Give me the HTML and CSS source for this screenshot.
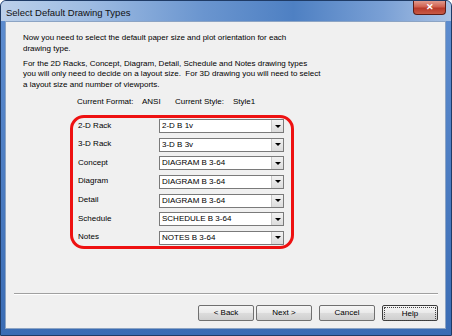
FILE: index.html
```html
<html>
<head>
<link rel="stylesheet" href="styles.css">
</head>
<body>
<div class="window">
  <div class="titlebar">
    <span class="title">Select Default Drawing Types</span>
    <span class="close">&#x2715;</span>
  </div>
  <div class="panel">
    <p class="intro">Now you need to select the default paper size and plot orientation for each<br>drawing type.</p>
    <p class="intro2">For the 2D Racks, Concept, Diagram, Detail, Schedule and Notes drawing types<br>you will only need to decide on a layout size.&nbsp; For 3D drawing you will need to select<br>a layout size and number of viewports.</p>
    <div class="current">
      <span class="k1">Current Format:</span><span class="v1">ANSI</span>
      <span class="k2">Current Style:</span><span class="v2">Style1</span>
    </div>
    <div class="ring">
      <div class="rows">
        <span class="lbl">2-D Rack</span><div class="combo"><span class="val">2-D B 1v</span><span class="arrow"></span></div>
        <span class="lbl">3-D Rack</span><div class="combo"><span class="val">3-D B 3v</span><span class="arrow"></span></div>
        <span class="lbl">Concept</span><div class="combo"><span class="val">DIAGRAM B 3-64</span><span class="arrow"></span></div>
        <span class="lbl">Diagram</span><div class="combo"><span class="val">DIAGRAM B 3-64</span><span class="arrow"></span></div>
        <span class="lbl">Detail</span><div class="combo"><span class="val">DIAGRAM B 3-64</span><span class="arrow"></span></div>
        <span class="lbl">Schedule</span><div class="combo"><span class="val">SCHEDULE B 3-64</span><span class="arrow"></span></div>
        <span class="lbl">Notes</span><div class="combo"><span class="val">NOTES B 3-64</span><span class="arrow"></span></div>
      </div>
    </div>
    <div class="spacer"></div>
    <div class="sep"></div>
    <div class="buttons">
      <span class="btn">&lt; Back</span>
      <span class="btn">Next &gt;</span>
      <span class="btn gap">Cancel</span>
      <span class="btn gap focus"><span class="inner">Help</span></span>
    </div>
  </div>
</div>
</body>
</html>
```
FILE: styles.css
```css
body
{
margin:0;
font-family:"Liberation Sans", Arial, sans-serif;
font-size:8px;
color:#000;
}
.window
{
width:452px;
height:336px;
box-sizing:border-box;
border:1px solid #1f3b66;
border-radius:6px 6px 0 0;
background:linear-gradient(to bottom, #5f8ed0, #3a6cb4);
display:flex;
flex-direction:column;
}
.titlebar
{
height:20px;
display:flex;
justify-content:space-between;
align-items:flex-start;
background:linear-gradient(to right, #bcd0ea 0%, #9dbbe2 20%, #6a95cf 45%, #4e80c3 65%, #7aa0d5 85%, #a9c2e4 100%);
border-radius:5px 5px 0 0;
}
.title
{
font-size:9.5px;
padding:6px 0 0 5px;
color:#111;
}
.close
{
width:33px;
height:14px;
margin-right:5px;
box-sizing:border-box;
border:1px solid #5e1d16;
border-top:none;
border-radius:0 0 4px 4px;
background:linear-gradient(to bottom, #e19a8d 0%, #d0604f 45%, #b8392a 55%, #c85a45 100%);
color:#fff;
font-size:9px;
font-weight:bold;
text-align:center;
line-height:13px;
}
.panel
{
flex:1;
margin:0 5px 6px 4px;
background:#f0f0f0;
border:1px solid #8ca4c4;
display:flex;
flex-direction:column;
}
.intro
{
margin:11px 0 0 17px;
line-height:10.5px;
}
.intro2
{
margin:4.5px 0 0 17px;
line-height:10.5px;
}
.current
{
margin:6.5px 0 0 71px;
line-height:10.5px;
display:flex;
white-space:nowrap;
}
.k1 { width:65px; }
.v1 { width:33px; }
.k2 { width:58px; }
.ring
{
margin:8px 0 0 64px;
width:224px;
box-sizing:border-box;
border:3px solid #ee1111;
border-radius:14px;
padding:1px 6px 1px 5px;
}
.rows
{
display:grid;
grid-template-columns:81px 125px;
row-gap:4.67px;
align-items:center;
}
.lbl
{
position:relative;
top:-1px;
}
.combo
{
height:14px;
box-sizing:border-box;
border:1px solid #7a7a7a;
background:#fff;
display:flex;
align-items:center;
}
.val
{
flex:1;
padding-left:2px;
line-height:12px;
}
.arrow
{
width:11px;
height:12px;
background:linear-gradient(to bottom, #f2f2f2, #dcdcdc);
border-left:1px solid #c8c8c8;
display:flex;
align-items:center;
justify-content:center;
}
.arrow::after
{
content:"";
border-left:3px solid transparent;
border-right:3px solid transparent;
border-top:3px solid #000;
}
.spacer
{
flex:1;
}
.sep
{
margin:0 7px 0 8px;
border-top:1px solid #a0a0a0;
border-bottom:1px solid #ffffff;
}
.buttons
{
display:flex;
justify-content:flex-end;
padding:10px 7px 7px 0;
}
.btn
{
width:56px;
height:16px;
box-sizing:border-box;
border:1px solid #707070;
border-radius:2px;
background:linear-gradient(to bottom, #f6f6f6 0%, #e9e9e9 50%, #dcdcdc 51%, #cfcfcf 100%);
text-align:center;
line-height:14px;
margin-left:2px;
}
.gap
{
margin-left:7px;
}
.focus
{
border:1px solid #3c3c3c;
padding:1px;
}
.inner
{
display:block;
height:12px;
line-height:12px;
border:1px dotted #444;
}
```
